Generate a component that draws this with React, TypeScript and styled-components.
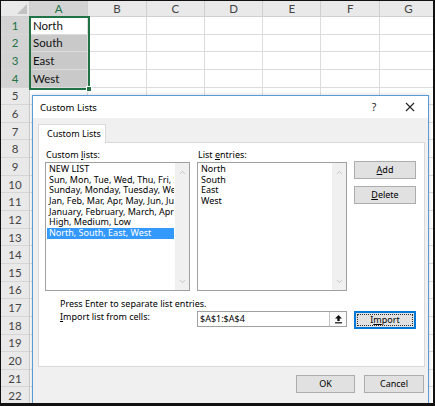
import React from "react";
import styled, { createGlobalStyle } from "styled-components";
import { ChevronUp, ChevronDown } from "lucide-react";

const GlobalStyle = createGlobalStyle`
  html, body { margin: 0; padding: 0; background: #fff; }
  * { box-sizing: border-box; }
`;

const COLS = ["A", "B", "C", "D", "E", "F", "G"];
const ROW_COUNT = 22;
const CELLS: Record<string, string> = { A1: "North", A2: "South", A3: "East", A4: "West" };
const SELECTED = ["A1", "A2", "A3", "A4"];

const CUSTOM_LISTS = [
  "NEW LIST",
  "Sun, Mon, Tue, Wed, Thu, Fri, Sat",
  "Sunday, Monday, Tuesday, Wednesday, Thursday, Friday, Saturday",
  "Jan, Feb, Mar, Apr, May, Jun, Jul, Aug, Sep, Oct, Nov, Dec",
  "January, February, March, April, May, June, July",
  "High, Medium, Low",
  "North, South, East, West",
];
const ENTRIES = ["North", "South", "East", "West"];

const Frame = styled.div`
  position: relative;
  width: 435px;
  height: 406px;
  border: 1px solid #111;
  border-right-width: 2px;
  border-bottom-width: 3px;
  overflow: hidden;
  background: #fff;
`;

const Sheet = styled.div`
  display: grid;
  grid-template-columns: 29px repeat(7, 58.3px);
  grid-template-rows: 16px repeat(${ROW_COUNT}, 17.65px);
  font-family: Lato, "Liberation Sans", sans-serif;
`;

const Corner = styled.div`
  position: relative;
  background: #e9e9e9;
  border-right: 1px solid #cfcfcf;
  border-bottom: 1px solid #cfcfcf;

  &::after {
    content: "";
    position: absolute;
    right: 2px;
    bottom: 2px;
    border-style: solid;
    border-width: 0 0 10px 10px;
    border-color: transparent transparent #c2c2c2 transparent;
  }
`;

const ColHeader = styled.div<{ $active?: boolean }>`
  display: flex;
  align-items: center;
  justify-content: center;
  font-size: 11.5px;
  color: ${(p) => (p.$active ? "#217346" : "#444")};
  background: ${(p) => (p.$active ? "#d3d3d3" : "#e9e9e9")};
  border-right: 1px solid #cfcfcf;
  border-bottom: 1px solid ${(p) => (p.$active ? "#217346" : "#cfcfcf")};
`;

const RowHeader = styled.div<{ $active?: boolean }>`
  display: flex;
  align-items: center;
  justify-content: center;
  font-size: 11.5px;
  color: ${(p) => (p.$active ? "#217346" : "#444")};
  background: ${(p) => (p.$active ? "#d3d3d3" : "#e9e9e9")};
  border-right: 1px solid ${(p) => (p.$active ? "#217346" : "#cfcfcf")};
  border-bottom: 1px solid #d6d6d6;
`;

const Cell = styled.div<{ $fill?: boolean }>`
  display: flex;
  align-items: center;
  padding-left: 3px;
  font-size: 11.5px;
  color: #111;
  background: ${(p) => (p.$fill ? "#c9c9c9" : "#fff")};
  border-right: 1px solid #dcdcdc;
  border-bottom: 1px solid #dcdcdc;
`;

const Selection = styled.div`
  position: absolute;
  left: 28px;
  top: 15px;
  width: 61px;
  height: 74px;
  border: 2px solid #217346;
  pointer-events: none;
`;

const FillHandle = styled.div`
  position: absolute;
  right: -4px;
  bottom: -4px;
  width: 6px;
  height: 6px;
  background: #217346;
  border: 1px solid #fff;
`;

const Dialog = styled.div`
  position: absolute;
  left: 31px;
  top: 94px;
  width: 397px;
  height: 312px;
  display: flex;
  flex-direction: column;
  background: #f0f0f0;
  border: 1px solid #5b9bd5;
  box-shadow: 0 0 4px rgba(0, 0, 0, 0.18);
  font-family: "Noto Sans", "Open Sans", sans-serif;
  font-size: 9px;
  color: #000;
`;

const TitleBar = styled.div`
  height: 22px;
  display: flex;
  align-items: center;
  padding-left: 7px;
  background: #fff;
`;

const Title = styled.div`
  flex: 1;
  font-size: 9.5px;
`;

const TitleButton = styled.div`
  width: 30px;
  height: 22px;
  display: flex;
  align-items: center;
  justify-content: center;
  font-size: 10.5px;
  color: #222;
`;

const TitleButtons = styled.div`
  display: flex;
  gap: 6px;
  padding-right: 3px;
`;

const Body = styled.div`
  flex: 1;
  padding: 6px 3px 0 5px;
`;

const Tab = styled.div`
  position: relative;
  z-index: 1;
  width: 68px;
  height: 19px;
  margin-bottom: -1px;
  line-height: 18px;
  padding-left: 8px;
  background: #fff;
  border: 1px solid #d9d9d9;
  border-bottom: none;
`;

const Panel = styled.div`
  height: 225px;
  padding: 5px 0 0 6px;
  background: #fff;
  border: 1px solid #d9d9d9;
`;

const PanelGrid = styled.div`
  display: grid;
  grid-template-columns: 145px 150px 62px;
  grid-template-rows: 14px 129px 19px 18px;
  column-gap: 7px;
`;

const FieldLabel = styled.div`
  line-height: 14px;
  padding-left: 1px;
  white-space: nowrap;
`;

const ListBox = styled.div`
  display: flex;
  border: 1px solid #a0a0a0;
  background: #fff;
`;

const ListItems = styled.div`
  flex: 1;
  min-width: 0;
  padding: 1px;
  overflow: hidden;
`;

const ListItem = styled.div<{ $selected?: boolean }>`
  height: 10.67px;
  line-height: 10.67px;
  padding-left: 2px;
  white-space: nowrap;
  overflow: hidden;
  color: ${(p) => (p.$selected ? "#fff" : "#000")};
  background: ${(p) => (p.$selected ? "#3399ff" : "transparent")};
`;

const ScrollBar = styled.div`
  width: 14px;
  display: flex;
  flex-direction: column;
  justify-content: space-between;
  align-items: center;
  padding: 5px 0 4px;
  background: #f0f0f0;
  color: #a6a6a6;
`;

const SideButtons = styled.div`
  display: flex;
  flex-direction: column;
  gap: 7px;
  margin-top: -1px;
`;

const Button = styled.div<{ $focused?: boolean; $width?: number }>`
  position: relative;
  width: ${(p) => (p.$width ? `${p.$width}px` : "100%")};
  height: 18px;
  line-height: 16px;
  text-align: center;
  white-space: nowrap;
  background: #e1e1e1;
  border: 1px solid ${(p) => (p.$focused ? "#0078d7" : "#adadad")};
  box-shadow: ${(p) => (p.$focused ? "inset 0 0 0 1px #0078d7" : "none")};

  &::after {
    content: "";
    display: ${(p) => (p.$focused ? "block" : "none")};
    position: absolute;
    inset: 2px;
    border: 1px dotted #333;
  }
`;

const Hint = styled.div`
  grid-column: 1 / -1;
  align-self: end;
  line-height: 12px;
  padding-left: 15px;
`;

const ImportLabel = styled.div`
  padding-left: 15px;
  line-height: 14px;
  white-space: nowrap;
`;

const RangeInput = styled.div`
  margin-top: 1px;
  height: 16px;
  display: flex;
  border: 1px solid #a0a0a0;
  background: #fff;
`;

const RangeValue = styled.div`
  flex: 1;
  line-height: 14px;
  padding-left: 2px;
`;

const RangeButton = styled.div`
  width: 17px;
  display: flex;
  align-items: center;
  justify-content: center;
  border-left: 1px solid #c4c4c4;
  background: #fbfbfb;
`;

const ImportSlot = styled.div`
  margin-top: 1px;
`;

const Footer = styled.div`
  display: flex;
  justify-content: flex-end;
  gap: 9px;
  margin-top: 8px;
  padding-right: 1px;
`;

function CloseIcon() {
  return (
    <svg width="10" height="10" viewBox="0 0 10 10">
      <path d="M1 1 L9 9 M9 1 L1 9" stroke="#222" strokeWidth="1.1" fill="none" />
    </svg>
  );
}

function RangeIcon() {
  return (
    <svg width="9" height="10" viewBox="0 0 9 10">
      <path d="M4.5 1 L8 4.5 H5.7 V7 H3.3 V4.5 H1 Z" fill="#111" />
      <rect x="1" y="8.2" width="7" height="1.2" fill="#111" />
    </svg>
  );
}

function ListScroll() {
  return (
    <ScrollBar>
      <ChevronUp size={9} strokeWidth={1.5} />
      <ChevronDown size={9} strokeWidth={1.5} />
    </ScrollBar>
  );
}

function CustomListsDialog() {
  return (
    <Dialog>
      <TitleBar>
        <Title>Custom Lists</Title>
        <TitleButtons>
          <TitleButton>?</TitleButton>
          <TitleButton>
            <CloseIcon />
          </TitleButton>
        </TitleButtons>
      </TitleBar>
      <Body>
        <Tab>Custom Lists</Tab>
        <Panel>
          <PanelGrid>
            <FieldLabel>
              Custom <u>l</u>ists:
            </FieldLabel>
            <FieldLabel>
              List <u>e</u>ntries:
            </FieldLabel>
            <div />
            <ListBox>
              <ListItems>
                {CUSTOM_LISTS.map((item, i) => (
                  <ListItem key={item} $selected={i === CUSTOM_LISTS.length - 1}>
                    {item}
                  </ListItem>
                ))}
              </ListItems>
              <ListScroll />
            </ListBox>
            <ListBox>
              <ListItems>
                {ENTRIES.map((e) => (
                  <ListItem key={e}>{e}</ListItem>
                ))}
              </ListItems>
              <ListScroll />
            </ListBox>
            <SideButtons>
              <Button>
                <u>A</u>dd
              </Button>
              <Button>
                <u>D</u>elete
              </Button>
            </SideButtons>
            <Hint>Press Enter to separate list entries.</Hint>
            <ImportLabel>
              <u>I</u>mport list from cells:
            </ImportLabel>
            <RangeInput>
              <RangeValue>$A$1:$A$4</RangeValue>
              <RangeButton>
                <RangeIcon />
              </RangeButton>
            </RangeInput>
            <ImportSlot>
              <Button $focused>
                I<u>m</u>port
              </Button>
            </ImportSlot>
          </PanelGrid>
        </Panel>
        <Footer>
          <Button $width={59}>OK</Button>
          <Button $width={60}>Cancel</Button>
        </Footer>
      </Body>
    </Dialog>
  );
}

export default function App() {
  const rows = Array.from({ length: ROW_COUNT }, (_, i) => i + 1);
  return (
    <>
      <GlobalStyle />
      <Frame>
        <Sheet>
          <Corner />
          {COLS.map((c) => (
            <ColHeader key={c} $active={c === "A"}>
              {c}
            </ColHeader>
          ))}
          {rows.map((r) => (
            <React.Fragment key={r}>
              <RowHeader $active={r <= 4}>{r}</RowHeader>
              {COLS.map((c) => {
                const ref = `${c}${r}`;
                return (
                  <Cell key={ref} $fill={SELECTED.includes(ref) && ref !== "A1"}>
                    {CELLS[ref]}
                  </Cell>
                );
              })}
            </React.Fragment>
          ))}
        </Sheet>
        <Selection>
          <FillHandle />
        </Selection>
        <CustomListsDialog />
      </Frame>
    </>
  );
}
